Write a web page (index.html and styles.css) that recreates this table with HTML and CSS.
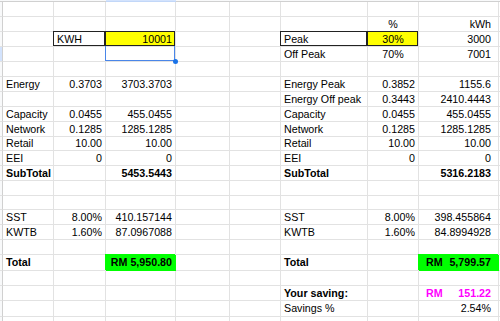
FILE: index.html
```html
<!DOCTYPE html>
<html lang="en">
<head>
<meta charset="utf-8">
<title>Electricity tariff comparison</title>
<link rel="stylesheet" href="styles.css">
</head>
<body>
<div class="sheet">
  <div class="row head"><span class="hd"></span><span></span><span></span><span class="colsel"></span><span></span><span></span><span></span><span></span><span></span><span></span></div>
  <div class="row"><span class="hd"></span><span></span><span></span><span></span><span></span><span></span><span></span><span></span><span></span><span></span></div>
  <div class="row"><span class="hd"></span><span></span><span></span><span></span><span></span><span></span><span></span><span class="ctr">%</span><span class="r">kWh</span><span></span></div>
  <div class="row"><span class="hd"></span><span></span><span class="box">KWH</span><span class="r yel box">10001</span><span></span><span></span><span class="box">Peak</span><span class="ctr yel box">30%</span><span class="r">3000</span><span></span></div>
  <div class="row"><span class="hd rowsel"></span><span></span><span></span><span class="sel"></span><span></span><span></span><span>Off Peak</span><span class="ctr">70%</span><span class="r">7001</span><span></span></div>
  <div class="row"><span class="hd"></span><span></span><span></span><span></span><span></span><span></span><span></span><span></span><span></span><span></span></div>
  <div class="row"><span class="hd"></span><span>Energy</span><span class="r">0.3703</span><span class="r">3703.3703</span><span></span><span></span><span>Energy Peak</span><span class="r">0.3852</span><span class="r">1155.6</span><span></span></div>
  <div class="row"><span class="hd"></span><span></span><span></span><span></span><span></span><span></span><span>Energy Off peak</span><span class="r">0.3443</span><span class="r">2410.4443</span><span></span></div>
  <div class="row"><span class="hd"></span><span>Capacity</span><span class="r">0.0455</span><span class="r">455.0455</span><span></span><span></span><span>Capacity</span><span class="r">0.0455</span><span class="r">455.0455</span><span></span></div>
  <div class="row"><span class="hd"></span><span>Network</span><span class="r">0.1285</span><span class="r">1285.1285</span><span></span><span></span><span>Network</span><span class="r">0.1285</span><span class="r">1285.1285</span><span></span></div>
  <div class="row short"><span class="hd"></span><span>Retail</span><span class="r">10.00</span><span class="r">10.00</span><span></span><span></span><span>Retail</span><span class="r">10.00</span><span class="r">10.00</span><span></span></div>
  <div class="row"><span class="hd"></span><span>EEI</span><span class="r">0</span><span class="r">0</span><span></span><span></span><span>EEI</span><span class="r">0</span><span class="r">0</span><span></span></div>
  <div class="row"><span class="hd"></span><span class="b">SubTotal</span><span></span><span class="r b">5453.5443</span><span></span><span></span><span class="b">SubTotal</span><span></span><span class="r b">5316.2183</span><span></span></div>
  <div class="row"><span class="hd"></span><span></span><span></span><span></span><span></span><span></span><span></span><span></span><span></span><span></span></div>
  <div class="row short"><span class="hd"></span><span></span><span></span><span></span><span></span><span></span><span></span><span></span><span></span><span></span></div>
  <div class="row"><span class="hd"></span><span>SST</span><span class="r">8.00%</span><span class="r">410.157144</span><span></span><span></span><span>SST</span><span class="r">8.00%</span><span class="r">398.455864</span><span></span></div>
  <div class="row"><span class="hd"></span><span>KWTB</span><span class="r">1.60%</span><span class="r">87.0967088</span><span></span><span></span><span>KWTB</span><span class="r">1.60%</span><span class="r">84.8994928</span><span></span></div>
  <div class="row"><span class="hd"></span><span></span><span></span><span></span><span></span><span></span><span></span><span></span><span></span><span></span></div>
  <div class="row tall"><span class="hd"></span><span class="b">Total</span><span></span><span class="r b grn">RM 5,950.80</span><span></span><span></span><span class="b">Total</span><span></span><span class="acc b grn"><i>RM</i><i>5,799.57</i></span><span></span></div>
  <div class="row"><span class="hd"></span><span></span><span></span><span></span><span></span><span></span><span></span><span></span><span></span><span></span></div>
  <div class="row"><span class="hd"></span><span></span><span></span><span></span><span></span><span></span><span class="b">Your saving:</span><span></span><span class="acc b mag"><i>RM</i><i>151.22</i></span><span></span></div>
  <div class="row tall"><span class="hd"></span><span></span><span></span><span></span><span></span><span></span><span>Savings %</span><span></span><span class="r">2.54%</span><span></span></div>
  <div class="row"><span class="hd"></span><span></span><span></span><span></span><span></span><span></span><span></span><span></span><span></span><span></span></div>
</div>
</body>
</html>
```
FILE: styles.css
```css
* { box-sizing: border-box; }
html, body { margin: 0; padding: 0; }
body {
  width: 500px;
  height: 321px;
  overflow: hidden;
  background: #fff;
  font-family: "Liberation Sans", Arial, sans-serif;
  font-size: 10.7px;
  color: #000;
}
.sheet { width: 500px; }
.row {
  --h: 15px;
  display: grid;
  grid-template-columns: 3px 51px 52px 70px 54px 51px 87px 51px 80px 1fr;
  height: var(--h);
}
.row.short { --h: 14px; }
.row.tall { --h: 16px; }
.row > span {
  position: relative;
  border-right: 1px solid #e2e2e2;
  border-bottom: 1px solid #e2e2e2;
  padding: 0 3px;
  line-height: calc(var(--h) - 1px);
  white-space: nowrap;
}
.row > span:nth-child(9) { padding: 0 7px; }
.row > .hd { padding: 0; background: #f8f9fa; border-right-color: #d0d0d0; }
.row > .rowsel { background: #d3e3fd; }
.head { height: 2px; }
.head > span { line-height: 0; background: #f8f9fa; border-right: none; border-bottom-color: #d0d0d0; }
.head > .colsel { background: #d3e3fd; border-bottom-color: #c2d7f8; }

.r { text-align: right; }
.ctr { text-align: center; }
.b { font-weight: bold; }
.yel { background: #ffff00; }
.grn { background: #00ff00; border-right-color: #00ff00 !important; border-bottom-color: #00ff00 !important; box-shadow: -1px -1px 0 #00ff00; }
.mag { color: #ff00ff; }
.acc { display: flex; justify-content: space-between; }
.row > .acc { padding-right: 9px; }
.acc i { font-style: normal; }

.box::after {
  content: "";
  position: absolute;
  left: -1px; top: -1px; right: 0; bottom: 0;
  border: 1px solid #222;
}
.sel::after {
  content: "";
  position: absolute;
  left: -1px; top: -1px; right: 0; bottom: 0;
  border: 1px solid #4a86e8;
  border-top: none;
}
.sel::before {
  content: "";
  position: absolute;
  right: -3px; bottom: -3px;
  width: 5px; height: 5px;
  border-radius: 50%;
  background: #1a73e8;
  z-index: 2;
}
```
